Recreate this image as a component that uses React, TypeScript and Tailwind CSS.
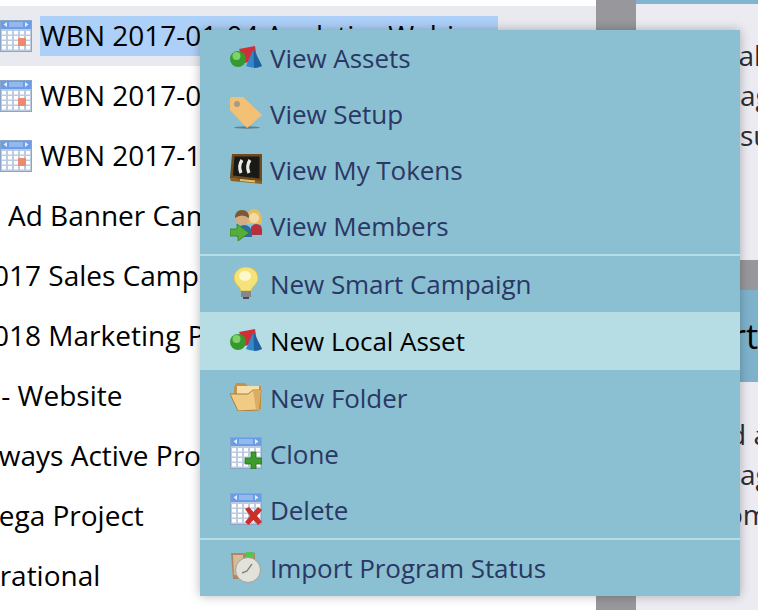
import React from 'react';

const font = { fontFamily: '"Open Sans", sans-serif' };

const CalendarGrid: React.FC = () => (
  <>
    <rect x="0" y="0" width="32" height="32" fill="#8aa6c8" />
    <rect x="1" y="1" width="30" height="8" fill="#6a9ce8" />
    <rect x="9" y="2" width="14" height="5" fill="#93b8ee" />
    <path d="M7 2 3.5 4.5 7 7Z M25 2 28.5 4.5 25 7Z" fill="#e6eefc" />
    <rect x="1" y="9" width="30" height="22" fill="#bccbdf" />
    {[2, 8, 14, 20, 26].map((x) =>
      [11, 16, 21, 26].map((y) => <rect key={`${x}-${y}`} x={x} y={y} width="4" height="3.5" fill="#fff" />)
    )}
  </>
);

const Calendar: React.FC = () => (
  <svg width="32" height="32" viewBox="0 0 32 32" className="shrink-0 blur-[0.4px]">
    <CalendarGrid />
    <rect x="18" y="18" width="8" height="8" fill="#ec8a70" />
  </svg>
);

const CalendarPlus: React.FC = () => (
  <svg width="32" height="32" viewBox="0 0 32 32" className="blur-[0.4px]">
    <CalendarGrid />
    <path d="M21 15h5v6h6v6h-6v5h-5v-5h-6v-6h6Z" fill="#3c9c2c" stroke="#2a6f1c" strokeWidth="0.8" />
  </svg>
);

const CalendarX: React.FC = () => (
  <svg width="32" height="32" viewBox="0 0 32 32" className="blur-[0.4px]">
    <CalendarGrid />
    <path d="M15 16 19 14 23.500 19 28 14 32 17 27 23 32 29 28 32 23.500 27 18.500 32 15 29 20 23Z" fill="#cb2f2c" />
  </svg>
);

const Shapes: React.FC = () => (
  <svg width="32" height="22" viewBox="0 0 32 22" className="blur-[0.4px]">
    <path d="M9 3 25 0 27 13 15 17Z" fill="#cf3038" />
    <path d="M23.500 3 32 20Q24 23.500 16 20Z" fill="#3487cc" />
    <path d="M23.500 3 32 20Q28 21.800 24 22Z" fill="#1f609f" />
    <circle cx="8" cy="13" r="8" fill="#35992f" />
    <circle cx="6.500" cy="10" r="4" fill="#7fd268" />
  </svg>
);

const Tag: React.FC = () => (
  <svg width="32" height="32" viewBox="0 0 32 32" className="blur-[0.4px]">
    <ellipse cx="17" cy="30.500" rx="13" ry="1.200" fill="#5f7f8c" />
    <path d="M0 2Q0 0 2 0H13L32 18 17 31 0 13Z" fill="#f2c176" />
    <circle cx="7" cy="7" r="3" fill="#a99a85" />
  </svg>
);

const Tokens: React.FC = () => (
  <svg width="32" height="32" viewBox="0 0 32 32" className="blur-[0.4px]">
    <path d="M2 1H32V29L0 25Z" fill="#6f4a1c" />
    <path d="M4.500 3.500H29.500V25.500L3 22.500Z" fill="#191917" />
    <path d="M12 7Q8 13 11 20M20 7Q16 13 19 20" fill="none" stroke="#ecece6" strokeWidth="3.200" />
    <path d="M0 25 32 28V31L1 28Z" fill="#8b5f24" />
    <path d="M10 26 25 27.500V29.500L10 28Z" fill="#e0c26a" />
  </svg>
);

const Members: React.FC = () => (
  <svg width="32" height="32" viewBox="0 0 32 32" className="blur-[0.4px]">
    <path d="M17 15Q16 0 24 0T32 15Z" fill="#e7bd5b" />
    <circle cx="24" cy="9" r="5" fill="#f3d9a6" />
    <path d="M20 25Q20 15 26 15T32 21V26H20Z" fill="#b5303a" />
    <circle cx="12" cy="9" r="7" fill="#d4ad85" />
    <path d="M5 9Q5 1 12 1T19 9Q12 4 5 9Z" fill="#7b5a33" />
    <path d="M7 27Q7 16 14 16T22 24V28H7Z" fill="#2d6ba1" />
    <path d="M0 20H7V15L19 24 8 32V27H0Z" fill="#55ae38" stroke="#35801f" strokeWidth="0.800" />
  </svg>
);

const Bulb: React.FC = () => (
  <svg width="24" height="32" viewBox="0 0 24 32" className="blur-[0.4px]">
    <path d="M12 0C5 0 0 5 0 11 0 17 6 19 7 24H17C18 19 24 17 24 11 24 5 19 0 12 0Z" fill="#f5e27a" stroke="#d8c14c" />
    <ellipse cx="11" cy="9" rx="6" ry="5" fill="#fdf8c9" />
    <rect x="7" y="24" width="10" height="6" fill="#85878a" />
    <rect x="9" y="30" width="6" height="2" fill="#4b4c4f" />
  </svg>
);

const Folder: React.FC = () => (
  <svg width="32" height="28" viewBox="0 0 32 28" className="blur-[0.4px]">
    <path d="M4 4 6 0H15L18 3H31V26H27L4 12Z" fill="#c2934c" />
    <path d="M7 3H29V12H7Z" fill="#f6dfa8" />
    <path d="M0 11H18L23 7H31L29 27 8 28Z" fill="#efcb85" stroke="#a97f3e" strokeWidth="1" />
    <path d="M23 7H31L29 27H26Z" fill="#d9ae64" />
  </svg>
);

const ImportStatus: React.FC = () => (
  <svg width="30" height="32" viewBox="0 0 30 32" className="blur-[0.4px]">
    <path d="M0 2H24V28H2Z" fill="#b08560" />
    <path d="M2 4H12V24H3Z" fill="#d7bc9c" />
    <rect x="15" y="1" width="8" height="7" fill="#5cc052" />
    <circle cx="17" cy="19" r="12.500" fill="#e3e2da" stroke="#a19f95" />
    <path d="M21 13 16 20 11 22" fill="none" stroke="#85857e" strokeWidth="1.400" />
  </svg>
);

const MenuItem: React.FC<{
  icon: React.ReactNode;
  label: string;
  active?: boolean;
  iconLift?: string;
  height?: string;
}> = ({ icon, label, active, iconLift = 'mb-[2px]', height = 'h-[56px]' }) => (
  <div className={`flex items-center pl-[30px] ${height} ${active ? 'bg-[#b6dce4] text-black' : 'text-[#2b3764]'}`}>
    <span className={`flex w-[32px] shrink-0 justify-center ${iconLift}`}>{icon}</span>
    <span className="pl-[8px] text-[26px] leading-none tracking-[-0.05px] whitespace-nowrap">{label}</span>
  </div>
);

const rows = [
  { label: 'WBN 2017-01-04 Analytics Webinar', icon: true },
  { label: 'WBN 2017-06-14 Product Webinar', icon: true },
  { label: 'WBN 2017-11-08 Customer Webinar', icon: true },
  { label: 'Ad Banner Campaign', shift: 'ml-[8px]' },
  { label: '2017 Sales Campaign', shift: 'ml-[-23px]' },
  { label: '2018 Marketing Plan', shift: 'ml-[-23px]' },
  { label: 'MP - Website', shift: 'ml-[-48px]' },
  { label: 'Always Active Program', shift: 'ml-[-26px]' },
  { label: 'Omega Project', shift: 'ml-[-49px]' },
  { label: 'Operational', shift: 'ml-[-55px]' },
];

export default function App() {
  return (
    <div className="relative flex h-[610px] w-[758px] overflow-hidden bg-white text-black" style={font}>
      {/* tree column */}
      <div className="flex w-[596px] shrink-0 flex-col pt-[6px]">
        {rows.map((row, i) => (
          <div key={row.label} className={`flex h-[60px] shrink-0 items-center ${i === 0 ? 'bg-[#e9e9f0]' : ''}`}>
            {row.icon ? (
              <>
                <Calendar />
                <span className={`ml-[8px] flex h-[40px] items-center overflow-hidden pb-[2px] whitespace-nowrap text-[28px] leading-none ${i === 0 ? 'w-[458px] bg-[#acd0f8]' : ''}`}>
                  {row.label}
                </span>
              </>
            ) : (
              <span className={`${row.shift} pb-[2px] whitespace-nowrap text-[28px] leading-none`}>{row.label}</span>
            )}
          </div>
        ))}
      </div>

      <div className="w-[40px] shrink-0 bg-[#98979c]" />

      {/* right panel */}
      <div className="flex w-[122px] shrink-0 flex-col overflow-hidden bg-[#ecebf2] text-[28px] leading-[40px] whitespace-nowrap text-[#2c2c34]">
        <div className="h-[4px] shrink-0 bg-[#82b4d2]" />
        <div className="flex h-[256px] shrink-0 flex-col pt-[31px] pl-[91px]">
          <p>ral</p>
          <p className="ml-[13px]">ag</p>
          <p className="ml-[13px]">su</p>
        </div>
        <div className="h-[30px] shrink-0 bg-[#98979c]" />
        <div className="flex h-[92px] shrink-0 items-center bg-[#7eb2cb] pl-[96px] text-[34px] text-black">rt</div>
        <div className="flex flex-col pt-[32px] pl-[91px]">
          <p className="ml-[2px]">d a</p>
          <p className="ml-[13px]">ag</p>
          <p className="ml-[-1px]">om</p>
        </div>
      </div>

      {/* context menu */}
      <div className="absolute top-[30px] left-[200px] flex w-[540px] flex-col bg-[#8ac0d1] shadow-[0_0_10px_rgba(0,0,0,0.28)]">
        <MenuItem icon={<Shapes />} label="View Assets" iconLift="mb-[4px] mt-[1px]" />
        <MenuItem icon={<Tag />} label="View Setup" />
        <MenuItem icon={<Tokens />} label="View My Tokens" />
        <MenuItem icon={<Members />} label="View Members" />
        <div className="h-[2px] bg-[#b6dce4]" />
        <MenuItem icon={<Bulb />} label="New Smart Campaign" />
        <MenuItem icon={<Shapes />} label="New Local Asset" active iconLift="mb-[3px]" height="h-[58px]" />
        <MenuItem icon={<Folder />} label="New Folder" />
        <MenuItem icon={<CalendarPlus />} label="Clone" />
        <MenuItem icon={<CalendarX />} label="Delete" />
        <div className="h-[2px] bg-[#b6dce4]" />
        <MenuItem icon={<ImportStatus />} label="Import Program Status" />
      </div>
    </div>
  );
}
